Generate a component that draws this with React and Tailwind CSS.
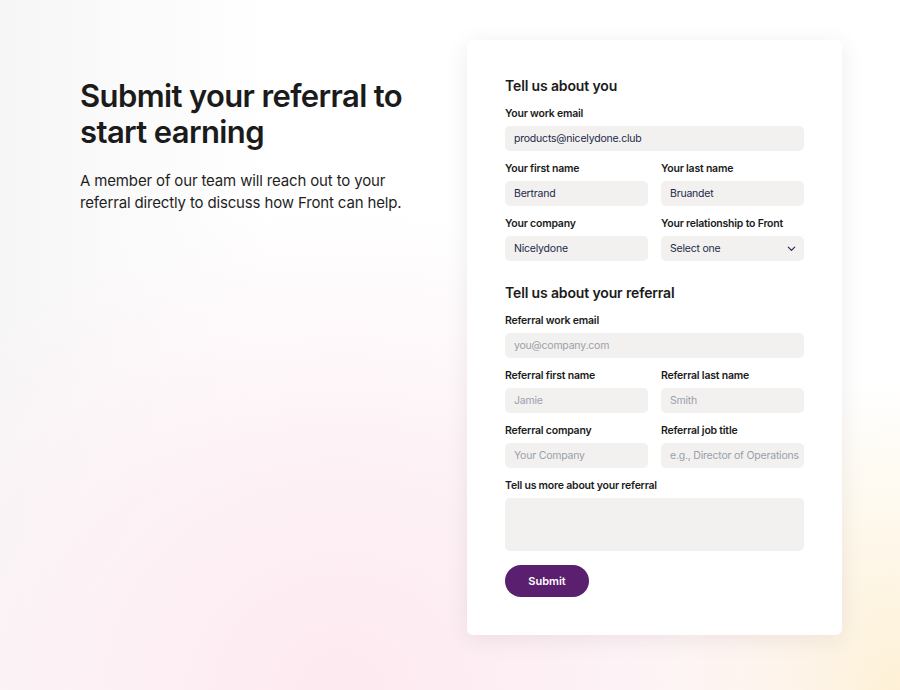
// App.jsx — referral submission page
const fieldClass =
  'block w-full h-[25px] pl-[9px] pr-[3px] bg-[#f2f1ef] rounded-[5px] text-[10.5px] tracking-[-0.02em] text-[#1c2a4a] placeholder-[#9aa0ab] outline-none border-0';

const labelClass = 'block text-[10.5px] leading-[14px] font-semibold tracking-[-0.02em] text-[#1b1b1b] mb-[5px]';

function Field({ label, placeholder, value, className = '' }) {
  return (
    <div className={className}>
      <label className={labelClass}>{label}</label>
      <input className={fieldClass} placeholder={placeholder} defaultValue={value} />
    </div>
  );
}

function SelectField({ label }) {
  return (
    <div>
      <label className={labelClass}>{label}</label>
      <div className="relative">
        <select className={fieldClass + ' appearance-none cursor-pointer'} defaultValue="">
          <option value="">Select one</option>
          <option value="customer">Customer</option>
          <option value="partner">Partner</option>
        </select>
        <div className="absolute inset-y-0 right-[7px] flex items-center pointer-events-none">
          <svg className="w-[11px] h-[11px] text-[#1c2a4a]" fill="none" stroke="currentColor" viewBox="0 0 24 24">
            <path strokeLinecap="round" strokeLinejoin="round" strokeWidth={2.5} d="M5 9l7 7 7-7" />
          </svg>
        </div>
      </div>
    </div>
  );
}

export default function App() {
  return (
    <div
      className="min-h-[690px] w-full flex bg-white bg-[radial-gradient(ellipse_60%_70%_at_38%_100%,#fde9f0_0%,#fdf1f5_45%,rgba(255,255,255,0)_100%),radial-gradient(ellipse_35%_45%_at_100%_100%,#fdf0d6_0%,rgba(253,240,214,0)_100%),linear-gradient(90deg,#f7f6f7_0%,#ffffff_30%)] pl-[80px] pt-[40px] pb-[55px]"
      style={{ fontFamily: 'Inter, "Noto Sans", sans-serif' }}
    >
      {/* Intro */}
      <div className="w-[387px] pt-[38px]">
        <h1 className="text-[31px] leading-[36px] font-semibold tracking-[-0.02em] text-[#1b1b1b]">
          Submit your referral to start earning
        </h1>
        <p className="mt-[20px] w-[340px] text-[15px] leading-[22px] tracking-[-0.01em] text-[#1f1f1f]">
          A member of our team will reach out to your referral directly to discuss how Front can help.
        </p>
      </div>

      {/* Form card */}
      <div className="w-[375px] bg-white rounded-[6px] shadow-[0_4px_24px_rgba(40,20,40,0.08)] px-[38px] pt-[36px] pb-[38px]">
        <h2 className="text-[14px] leading-[20px] font-semibold tracking-[-0.01em] text-[#1b1b1b] mb-[11px]">Tell us about you</h2>
        <div className="grid grid-cols-2 gap-x-[13px] gap-y-[11px]">
          <Field className="col-span-2" label="Your work email" value="products@nicelydone.club" />
          <Field label="Your first name" value="Bertrand" />
          <Field label="Your last name" value="Bruandet" />
          <Field label="Your company" value="Nicelydone" />
          <SelectField label="Your relationship to Front" />
        </div>

        <h2 className="mt-[22px] text-[14px] leading-[20px] font-semibold tracking-[-0.01em] text-[#1b1b1b] mb-[11px]">
          Tell us about your referral
        </h2>
        <div className="grid grid-cols-2 gap-x-[13px] gap-y-[11px]">
          <Field className="col-span-2" label="Referral work email" placeholder="you@company.com" />
          <Field label="Referral first name" placeholder="Jamie" />
          <Field label="Referral last name" placeholder="Smith" />
          <Field label="Referral company" placeholder="Your Company" />
          <Field label="Referral job title" placeholder="e.g., Director of Operations" />
          <div className="col-span-2">
            <label className={labelClass}>Tell us more about your referral</label>
            <textarea className="block w-full h-[53px] px-[9px] py-[6px] bg-[#f2f1ef] rounded-[5px] text-[10.5px] text-[#1c2a4a] outline-none resize-none" />
          </div>
        </div>

        <button className="mt-[14px] w-[84px] h-[32px] rounded-full bg-[#5b1f70] text-white text-[11px] font-semibold">
          Submit
        </button>
      </div>
    </div>
  );
}
